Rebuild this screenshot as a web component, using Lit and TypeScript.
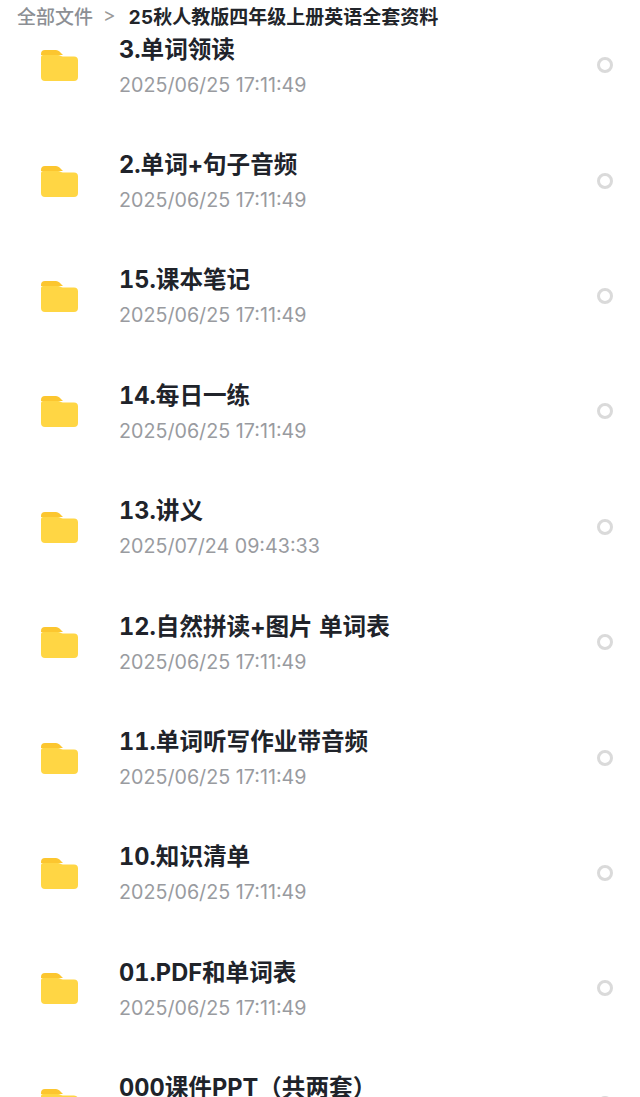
import {customElement} from "lit/decorators.js";
import {css, html, LitElement} from "lit";

const FILES = [
  {name: "3.单词领读", time: "2025/06/25 17:11:49"},
  {name: "2.单词+句子音频", time: "2025/06/25 17:11:49"},
  {name: "15.课本笔记", time: "2025/06/25 17:11:49"},
  {name: "14.每日一练", time: "2025/06/25 17:11:49"},
  {name: "13.讲义", time: "2025/07/24 09:43:33"},
  {name: "12.自然拼读+图片 单词表", time: "2025/06/25 17:11:49"},
  {name: "11.单词听写作业带音频", time: "2025/06/25 17:11:49"},
  {name: "10.知识清单", time: "2025/06/25 17:11:49"},
  {name: "01.PDF和单词表", time: "2025/06/25 17:11:49"},
  {name: "000课件PPT（共两套）", time: "2025/06/25 17:11:49"},
];

@customElement("app-root")
export class AppRoot extends LitElement {
  static styles = css`
    * {
      box-sizing: border-box;
    }

    :host {
      display: block;
      height: 1097px;
      overflow: hidden;
      background: #fff;
      font-family: Inter, "Noto Sans CJK SC", sans-serif;
    }

    .crumbs {
      display: flex;
      align-items: center;
      height: 31px;
      padding-left: 17px;
      white-space: nowrap;
    }

    .root {
      font-size: 19px;
      font-weight: 500;
      color: #8c8f94;
    }

    .sep {
      margin: 0 13px 0 10px;
      font-size: 19px;
      color: #999;
    }

    .current {
      font-size: 19px;
      font-weight: 700;
      color: #22252a;
      font-feature-settings: "tnum";
    }

    /* list is scrolled a little under the breadcrumb */
    .list {
      margin-top: -22px;
    }

    .row {
      display: flex;
      align-items: center;
      height: 115.4px;
      padding: 0 27px 0 41px;
    }

    .folder {
      width: 37px;
      height: 31px;
      flex: none;
      margin-top: -2px;
    }

    .info {
      flex: 1;
      margin-left: 41px;
      min-width: 0;
      margin-top: -2px;
    }

    .name {
      font-size: 23.6px;
      line-height: 34px;
      font-weight: 700;
      color: #20232a;
      white-space: nowrap;
      font-feature-settings: "tnum";
    }

    .time {
      margin-top: 4px;
      font-size: 19.7px;
      line-height: 28px;
      color: #999ba0;
      white-space: nowrap;
    }

    .check {
      width: 16px;
      height: 16px;
      flex: none;
      margin-top: -3px;
      border: 3px solid #dadada;
      border-radius: 50%;
    }
  `;

  renderFolder() {
    return html`
      <svg class="folder" viewBox="0 0 37 31">
        <path d="M0 4a4 4 0 0 1 4-4h11a5 5 0 0 1 3.500 1.500L22 5H0z" fill="#fcc62f"/>
        <path d="M0 7a2 2 0 0 1 2-2h15c2 0 3 1.500 5 1.500h11a4 4 0 0 1 4 4V27a4 4 0 0 1-4 4H4a4 4 0 0 1-4-4z" fill="#ffd644"/>
      </svg>
    `;
  }

  render() {
    return html`
      <div class="crumbs">
        <span class="root">全部文件</span>
        <span class="sep">&gt;</span>
        <span class="current">25秋人教版四年级上册英语全套资料</span>
      </div>
      <div class="list">
        ${FILES.map(f => html`
          <div class="row">
            ${this.renderFolder()}
            <div class="info">
              <div class="name">${f.name}</div>
              <div class="time">${f.time}</div>
            </div>
            <span class="check"></span>
          </div>
        `)}
      </div>
    `;
  }
}
